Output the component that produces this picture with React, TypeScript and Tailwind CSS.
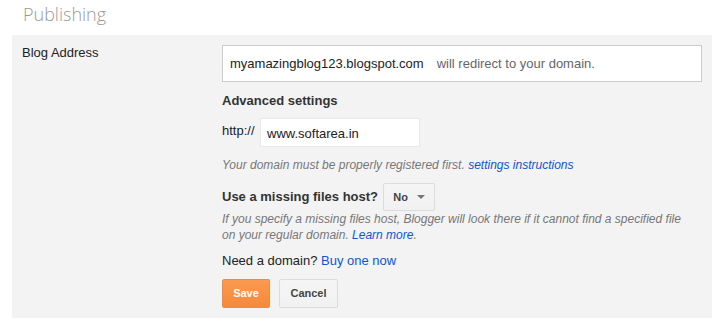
import React from 'react';

const linkCls = 'text-[#1155cc] cursor-pointer';

const SelectButton: React.FC<{ label: string }> = ({ label }) => (
  <div className="ml-[5px] flex h-[28px] w-[52px] items-center justify-center gap-[9px] rounded-[2px] border border-[#dcdcdc] bg-gradient-to-b from-[#f5f5f5] to-[#f1f1f1] text-[11px] font-bold text-[#444]">
    <span>{label}</span>
    <span className="h-0 w-0 border-x-[4px] border-t-[4px] border-x-transparent border-t-[#777]" />
  </div>
);

export default function App() {
  return (
    <div className="h-[327px] w-[723px] bg-white font-['Liberation_Sans',Arial,sans-serif] text-[13px] text-[#222]">
      <div className="h-[35px] pl-[23px] pt-[2px] font-['Open_Sans',sans-serif] text-[18px] font-light leading-[24px] text-[#9a9a9a]">
        Publishing
      </div>

      <div className="ml-[12px] flex w-[700px] bg-[#f3f3f3] pb-[10px] pt-[10px]">
        <div className="w-[210px] pl-[10px] leading-[16px] text-[#222]">Blog Address</div>

        <div className="flex w-[480px] flex-col">
          <div className="flex h-[37px] items-center border border-[#cccccc] bg-white pl-[7px] pt-[1px]">
            <span className="text-[#222]">myamazingblog123.blogspot.com</span>
            <span className="ml-[13px] text-[#666]">will redirect to your domain.</span>
          </div>

          <div className="mt-[11px] font-bold leading-[16px] text-[#333]">Advanced settings</div>

          <div className="mt-[9px] flex items-center">
            <span className="-mt-[3px] w-[38px] text-[#222]">http://</span>
            <div className="flex h-[29px] w-[160px] items-center border border-[#e8e8e8] bg-white pl-[6px] pt-[2px] text-[#222]">
              www.softarea.in
            </div>
          </div>

          <div className="mt-[10px] text-[12px] italic leading-[16px] text-[#777]">
            Your domain must be properly registered first.{' '}
            <span className={linkCls}>settings instructions</span>
          </div>

          <div className="mt-[10px] flex items-center">
            <span className="font-bold text-[#333]">Use a missing files host?</span>
            <SelectButton label="No" />
          </div>

          <div className="text-[12px] italic leading-[16px] text-[#777]">
            If you specify a missing files host, Blogger will look there if it cannot find a specified file
            <br />
            on your regular domain. <span className={linkCls}>Learn more</span>.
          </div>

          <div className="mt-[10px] leading-[16px] text-[#222]">
            Need a domain? <span className={linkCls}>Buy one now</span>
          </div>

          <div className="mt-[10px] flex gap-[9px]">
            <button className="h-[29px] w-[48px] rounded-[2px] border border-[#ef8a3e] bg-gradient-to-b from-[#fb9a50] to-[#f5893b] text-[11px] font-bold text-white">
              Save
            </button>
            <button className="h-[29px] w-[59px] rounded-[2px] border border-[#dcdcdc] bg-gradient-to-b from-[#f5f5f5] to-[#f1f1f1] text-[11px] font-bold text-[#444]">
              Cancel
            </button>
          </div>
        </div>
      </div>
    </div>
  );
}
